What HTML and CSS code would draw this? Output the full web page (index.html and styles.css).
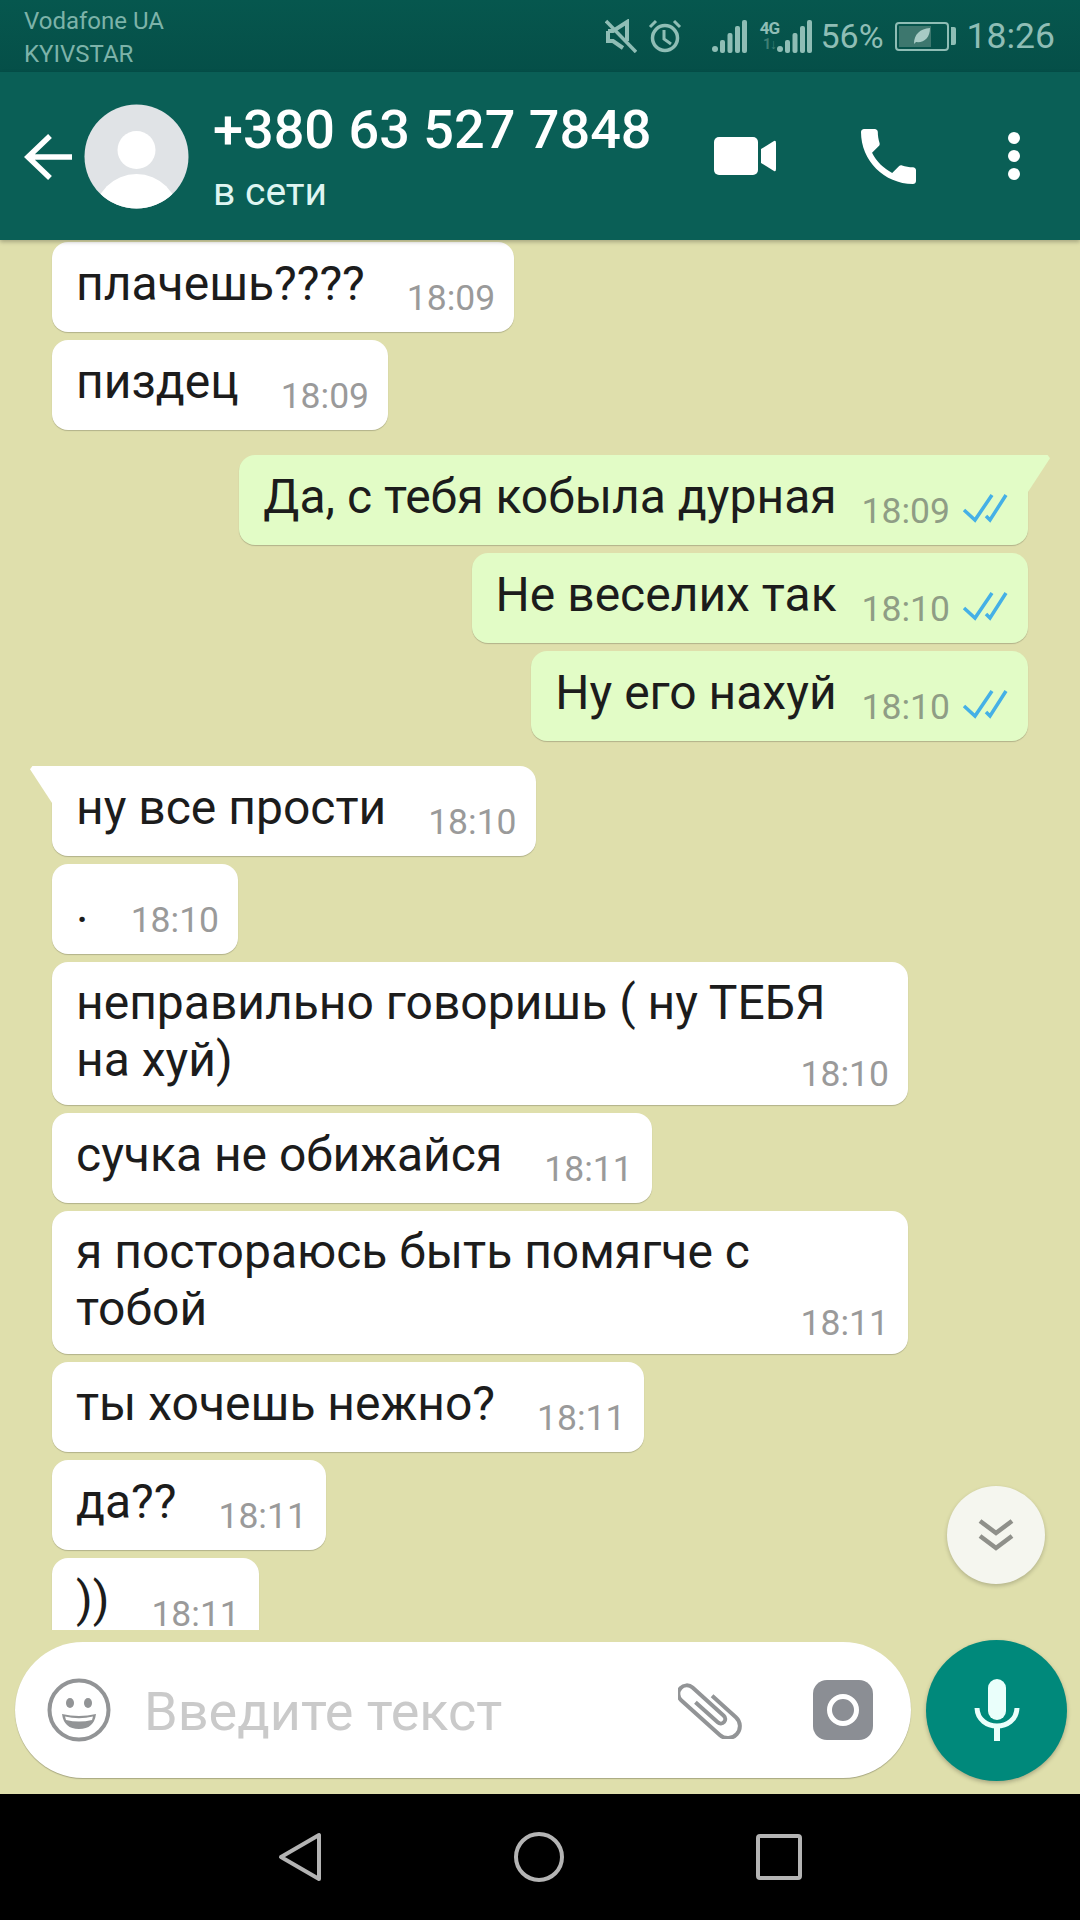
FILE: index.html
```html
<!DOCTYPE html>
<html lang="ru">
<head>
    <meta charset="UTF-8">
    <meta name="viewport" content="width=device-width, initial-scale=1.0">
    <title>WhatsApp</title>
    <link rel="stylesheet" href="styles.css">
</head>
<body>

<svg class="defs" width="0" height="0">
    <symbol id="ticks" viewBox="0 0 46 30">
        <path d="M2 17 L13 27 L30 2 M24 23 L28 27 L44 2" fill="none" stroke="#45b0e6" stroke-width="3.5"/>
    </symbol>
    <symbol id="signal" viewBox="0 0 35 34">
        <circle cx="3" cy="30" r="3"/>
        <rect x="8" y="21" width="5" height="13" rx="2"/>
        <rect x="15.5" y="14" width="5" height="20" rx="2"/>
        <rect x="23" y="7" width="5" height="27" rx="2"/>
        <rect x="30" y="1" width="5" height="33" rx="2"/>
    </symbol>
</svg>

<div class="phone">
    <!-- Status bar -->
    <div class="statusbar">
        <div class="carriers">
            <span>Vodafone UA</span>
            <span>KYIVSTAR</span>
        </div>
        <div class="status-icons">
            <svg class="ic-mute" width="32" height="34" viewBox="0 0 32 34">
                <path d="M3 12 H8 L22 3 V22 M3 12 V22 H8 L18 29" fill="none" stroke="#8fbdb5" stroke-width="4"/>
                <path d="M1 2 L31 33" stroke="#8fbdb5" stroke-width="3.5"/>
            </svg>
            <svg class="ic-alarm" width="34" height="34" viewBox="0 0 34 34">
                <circle cx="17" cy="19" r="12.5" fill="none" stroke="#8fbdb5" stroke-width="3.5"/>
                <path d="M16 11 V20 L23 25" fill="none" stroke="#8fbdb5" stroke-width="3"/>
                <path d="M2 8 L8 2 M32 8 L26 2" stroke="#8fbdb5" stroke-width="3"/>
            </svg>
            <svg class="ic-signal" width="35" height="34"><use href="#signal"/></svg>
            <div class="net">
                <span class="net-4g">4G</span>
                <span class="net-arrows">1↓</span>
            </div>
            <svg class="ic-signal2" width="35" height="34"><use href="#signal"/></svg>
            <span class="percent">56%</span>
            <div class="battery">
                <div class="battery-body">
                    <div class="battery-level">
                        <svg width="18" height="18" viewBox="0 0 18 18">
                            <path d="M1 17 C1 7 7 2 17 1 C17 11 11 16 3 15 Z" fill="#a8cbc5"/>
                        </svg>
                    </div>
                </div>
                <div class="battery-tip"></div>
            </div>
            <span class="clock">18:26</span>
        </div>
    </div>

    <!-- Chat header -->
    <header class="chat-header">
        <svg class="back" width="48" height="48" viewBox="0 0 48 48">
            <path d="M48 24 H4 M26 3 L4 24 L26 45" fill="none" stroke="#fff" stroke-width="5.5"/>
        </svg>
        <svg class="avatar" width="105" height="105" viewBox="0 0 105 105">
            <defs><clipPath id="avatarClip"><circle cx="52.5" cy="52.5" r="52"/></clipPath></defs>
            <circle cx="52.5" cy="52.5" r="52" fill="#e0e3e6"/>
            <circle cx="52.5" cy="46" r="19" fill="#fff"/>
            <ellipse cx="52.5" cy="112" rx="42" ry="42" fill="#fff" clip-path="url(#avatarClip)"/>
        </svg>
        <div class="contact">
            <div class="contact-name">+380 63 527 7848</div>
            <div class="contact-status">в сети</div>
        </div>
        <div class="actions">
            <svg width="62" height="38" viewBox="0 0 62 38">
                <rect x="0" y="0" width="44" height="38" rx="5" fill="#fff"/>
                <path d="M47 12 L60 4 Q62 3 62 6 V32 Q62 35 60 34 L47 26 Z" fill="#fff"/>
            </svg>
            <svg class="ic-call" width="55" height="55" viewBox="3 3 18 18">
                <path d="M6.62 10.79c1.44 2.83 3.76 5.14 6.59 6.59l2.2-2.2c.27-.27.67-.36 1.02-.24 1.12.37 2.33.57 3.57.57.55 0 1 .45 1 1V20c0 .55-.45 1-1 1-9.39 0-17-7.61-17-17 0-.55.45-1 1-1h3.5c.55 0 1 .45 1 1 0 1.25.2 2.45.57 3.57.11.35.03.74-.25 1.02l-2.2 2.2z" fill="#fff"/>
            </svg>
            <div class="dots"><i></i><i></i><i></i></div>
        </div>
    </header>

    <!-- Messages -->
    <main class="messages">
        <div class="bubble in"><span class="text">плачешь????</span><span class="time">18:09</span></div>
        <div class="bubble in"><span class="text">пиздец</span><span class="time">18:09</span></div>

        <div class="bubble out tail first"><span class="text">Да, с тебя кобыла дурная</span><span class="time">18:09</span><svg class="tick" width="46" height="30"><use href="#ticks"/></svg></div>
        <div class="bubble out"><span class="text">Не веселих так</span><span class="time">18:10</span><svg class="tick" width="46" height="30"><use href="#ticks"/></svg></div>
        <div class="bubble out"><span class="text">Ну его нахуй</span><span class="time">18:10</span><svg class="tick" width="46" height="30"><use href="#ticks"/></svg></div>

        <div class="bubble in tail first"><span class="text">ну все прости</span><span class="time">18:10</span></div>
        <div class="bubble in"><span class="text">.</span><span class="time">18:10</span></div>
        <div class="bubble in wide"><span class="text">неправильно говоришь ( ну ТЕБЯ на хуй)</span><span class="time">18:10</span></div>
        <div class="bubble in"><span class="text">сучка не обижайся</span><span class="time">18:11</span></div>
        <div class="bubble in wide"><span class="text">я постораюсь быть помягче с тобой</span><span class="time">18:11</span></div>
        <div class="bubble in"><span class="text">ты хочешь нежно?</span><span class="time">18:11</span></div>
        <div class="bubble in"><span class="text">да??</span><span class="time">18:11</span></div>
        <div class="bubble in"><span class="text">))</span><span class="time">18:11</span></div>

        <button class="scroll-down">
            <svg width="36" height="34" viewBox="0 0 36 34">
                <path d="M2 3 L18 15 L34 3 M2 18 L18 30 L34 18" fill="none" stroke="#8f908a" stroke-width="4.5"/>
            </svg>
        </button>
    </main>

    <!-- Input -->
    <div class="composer">
        <div class="input">
            <svg class="ic-emoji" width="64" height="64" viewBox="0 0 64 64">
                <circle cx="32" cy="32" r="29.5" fill="none" stroke="#929496" stroke-width="4"/>
                <ellipse cx="23" cy="25" rx="4" ry="5" fill="#929496"/>
                <ellipse cx="41" cy="25" rx="4" ry="5" fill="#929496"/>
                <path d="M15 36 Q32 40 49 36 Q47 51 32 51 Q17 51 15 36 Z" fill="#929496"/>
                <path d="M18 38.5 Q32 42 46 38.5 L45 42 Q32 45 19 42 Z" fill="#fff"/>
            </svg>
            <span class="placeholder">Введите текст</span>
            <svg class="ic-clip" width="64" height="58" viewBox="-32 -29 64 58">
                <path transform="rotate(42)" d="M-8 -12 H24 A12 12 0 0 1 24 12 H-28 A8.5 8.5 0 0 1 -28 -5 H14 A4.5 4.5 0 0 1 14 4 H-16" fill="none" stroke="#929496" stroke-width="4"/>
            </svg>
            <div class="ic-camera"><i></i></div>
        </div>
        <div class="mic">
            <svg width="46" height="62" viewBox="0 0 46 62">
                <rect x="14" y="0" width="18" height="41" rx="9" fill="#eafffb"/>
                <path d="M3 29 C4 53 42 53 43 29" fill="none" stroke="#eafffb" stroke-width="5"/>
                <rect x="20" y="46" width="6" height="16" fill="#eafffb"/>
            </svg>
        </div>
    </div>

    <!-- Navigation bar -->
    <nav class="navbar">
        <svg width="44" height="50" viewBox="0 0 44 50">
            <path d="M41 3 V47 L3 25 Z" fill="none" stroke="#b4b4b4" stroke-width="4" stroke-linejoin="round"/>
        </svg>
        <svg width="50" height="50" viewBox="0 0 50 50">
            <circle cx="25" cy="25" r="23" fill="none" stroke="#b4b4b4" stroke-width="4"/>
        </svg>
        <svg width="46" height="46" viewBox="0 0 46 46">
            <rect x="2" y="2" width="42" height="42" rx="2" fill="none" stroke="#b4b4b4" stroke-width="4"/>
        </svg>
    </nav>
</div>

</body>
</html>
```

FILE: styles.css
```css
/* Reset */
* {
    box-sizing: border-box;
    margin: 0;
    padding: 0;
}

body {
    width: 1080px;
    height: 1920px;
    overflow: hidden;
    font-family: Roboto, "Noto Sans", sans-serif;
    background-color: #dfdfac;
    color: #1c1c1c;
}

.defs {
    position: absolute;
}

.phone {
    height: 1920px;
    display: flex;
    flex-direction: column;
}

/* Status bar */
.statusbar {
    height: 72px;
    padding: 0 25px 0 24px;
    display: flex;
    justify-content: space-between;
    align-items: center;
    background: linear-gradient(#06574e, #054f48);
    color: #8fbdb5;
}

.carriers {
    display: flex;
    flex-direction: column;
    font-size: 24px;
    line-height: 33px;
    color: #7db3a9;
    padding-top: 3px;
}

.status-icons {
    display: flex;
    align-items: center;
    fill: #8fbdb5;
}

.ic-alarm {
    margin-left: 11px;
}

.ic-signal {
    margin-left: 30px;
}

.net {
    width: 20px;
    margin-left: 12px;
    display: flex;
    flex-direction: column;
    align-items: center;
    font-size: 17px;
    line-height: 16px;
    font-weight: 700;
    letter-spacing: -1px;
}

.net-arrows {
    color: #3f7f75;
    font-size: 14px;
}

.ic-signal2 {
    margin-left: -2px;
}

.percent {
    margin-left: 8px;
    font-size: 34px;
}

.battery {
    margin-left: 11px;
    display: flex;
    align-items: center;
}

.battery-body {
    width: 54px;
    height: 29px;
    padding: 2px;
    border: 2px solid #8fbdb5;
    border-radius: 4px;
}

.battery-level {
    width: 32px;
    height: 100%;
    background-color: #3d776e;
    display: flex;
    align-items: center;
    justify-content: flex-end;
}

.battery-tip {
    width: 5px;
    height: 18px;
    margin-left: 2px;
    background-color: #8fbdb5;
    border-radius: 0 2px 2px 0;
}

.clock {
    margin-left: 11px;
    font-size: 35.5px;
}

/* Chat header */
.chat-header {
    height: 168px;
    padding: 0 60px 0 24px;
    display: flex;
    align-items: center;
    background-color: #0a5f56;
    box-shadow: 0 2px 4px rgba(0,0,0,0.25);
    position: relative;
    z-index: 2;
}

.back {
    flex-shrink: 0;
    margin-top: 2px;
}

.avatar {
    flex-shrink: 0;
    margin-left: 12px;
}

.contact {
    flex: 1;
    margin-left: 24px;
    padding-top: 7px;
}

.contact-name {
    font-size: 54px;
    font-weight: 500;
    line-height: 58px;
    color: #fff;
    white-space: nowrap;
}

.contact-status {
    margin-top: 7px;
    font-size: 39px;
    line-height: 52px;
    color: #dff5f1;
}

.actions {
    display: flex;
    align-items: center;
}

.ic-call {
    margin-left: 85px;
}

.dots {
    margin-left: 92px;
    display: flex;
    flex-direction: column;
    gap: 6px;
}

.dots i {
    width: 12px;
    height: 12px;
    border-radius: 50%;
    background-color: #fff;
}

/* Messages */
.messages {
    flex: 1;
    min-height: 0;
    padding: 2px 52px 0;
    display: flex;
    flex-direction: column;
    gap: 8px;
    overflow: hidden;
    position: relative;
}

.bubble {
    flex-shrink: 0;
    height: 90px;
    padding: 0 19px 0 24px;
    display: flex;
    align-items: flex-start;
    border-radius: 16px;
    box-shadow: 0 1px 1px rgba(0,0,0,0.2);
    position: relative;
    width: fit-content;
}

.bubble.in {
    background-color: #fff;
    align-self: flex-start;
}

.bubble.out {
    background-color: #e2fcc6;
    align-self: flex-end;
    padding-right: 20px;
}

.bubble.first {
    margin-top: 17px;
}

.text {
    font-size: 48px;
    line-height: 56px;
    padding-top: 14px;
    white-space: nowrap;
}

.time {
    font-size: 35.5px;
    line-height: 40px;
    margin-top: 36px;
    margin-left: 42px;
    color: #9a9a9a;
}

.out .time {
    margin-left: 25px;
    color: #8f9d85;
}

.tick {
    margin-top: 38px;
    margin-left: 12px;
}

/* Message with two lines */
.bubble.wide {
    width: 856px;
    height: 143px;
    display: grid;
}

.wide .text,
.wide .time {
    grid-area: 1 / 1;
}

.wide .text {
    white-space: normal;
    line-height: 57px;
    padding: 12px 50px 0 0;
}

.wide .time {
    justify-self: end;
    margin-top: 92px;
}

/* Bubble tails */
.tail::after {
    content: "";
    position: absolute;
    top: 0;
    width: 24px;
    height: 40px;
}

.in.tail {
    border-top-left-radius: 0;
}

.out.tail {
    border-top-right-radius: 0;
}

.in.tail::after {
    left: -22px;
    background-color: #fff;
    clip-path: polygon(10% 0, 100% 0, 100% 100%, 0 8%);
}

.out.tail::after {
    right: -22px;
    background-color: #e2fcc6;
    clip-path: polygon(0 0, 90% 0, 100% 8%, 0 100%);
}

.scroll-down {
    position: absolute;
    right: 35px;
    bottom: 46px;
    width: 98px;
    height: 98px;
    border: none;
    border-radius: 50%;
    background-color: #f5f6ef;
    box-shadow: 0 2px 4px rgba(0,0,0,0.2);
    display: flex;
    align-items: center;
    justify-content: center;
}

/* Input */
.composer {
    height: 164px;
    padding: 0 13px 4px 15px;
    display: flex;
    align-items: center;
    justify-content: space-between;
}

.input {
    width: 896px;
    height: 136px;
    padding: 0 38px 0 32px;
    display: flex;
    align-items: center;
    background-color: #fff;
    border-radius: 68px;
    box-shadow: 0 1px 1px rgba(0,0,0,0.25);
}

.placeholder {
    flex: 1;
    margin-left: 33px;
    font-size: 54px;
    color: #cacaca;
    padding-top: 2px;
}

.ic-camera {
    width: 60px;
    height: 60px;
    margin-left: 71px;
    display: flex;
    align-items: center;
    justify-content: center;
    background-color: #8b8e94;
    border-radius: 14px;
}

.ic-camera i {
    width: 32px;
    height: 32px;
    border: 5px solid #fff;
    border-radius: 50%;
}

.mic {
    width: 141px;
    height: 141px;
    display: flex;
    align-items: center;
    justify-content: center;
    background-color: #00897b;
    border-radius: 50%;
    box-shadow: 0 2px 4px rgba(0,0,0,0.25);
}

/* Navigation bar */
.navbar {
    height: 126px;
    flex-shrink: 0;
    padding: 0 278px;
    display: flex;
    align-items: center;
    justify-content: space-between;
    background-color: #000;
}
```
